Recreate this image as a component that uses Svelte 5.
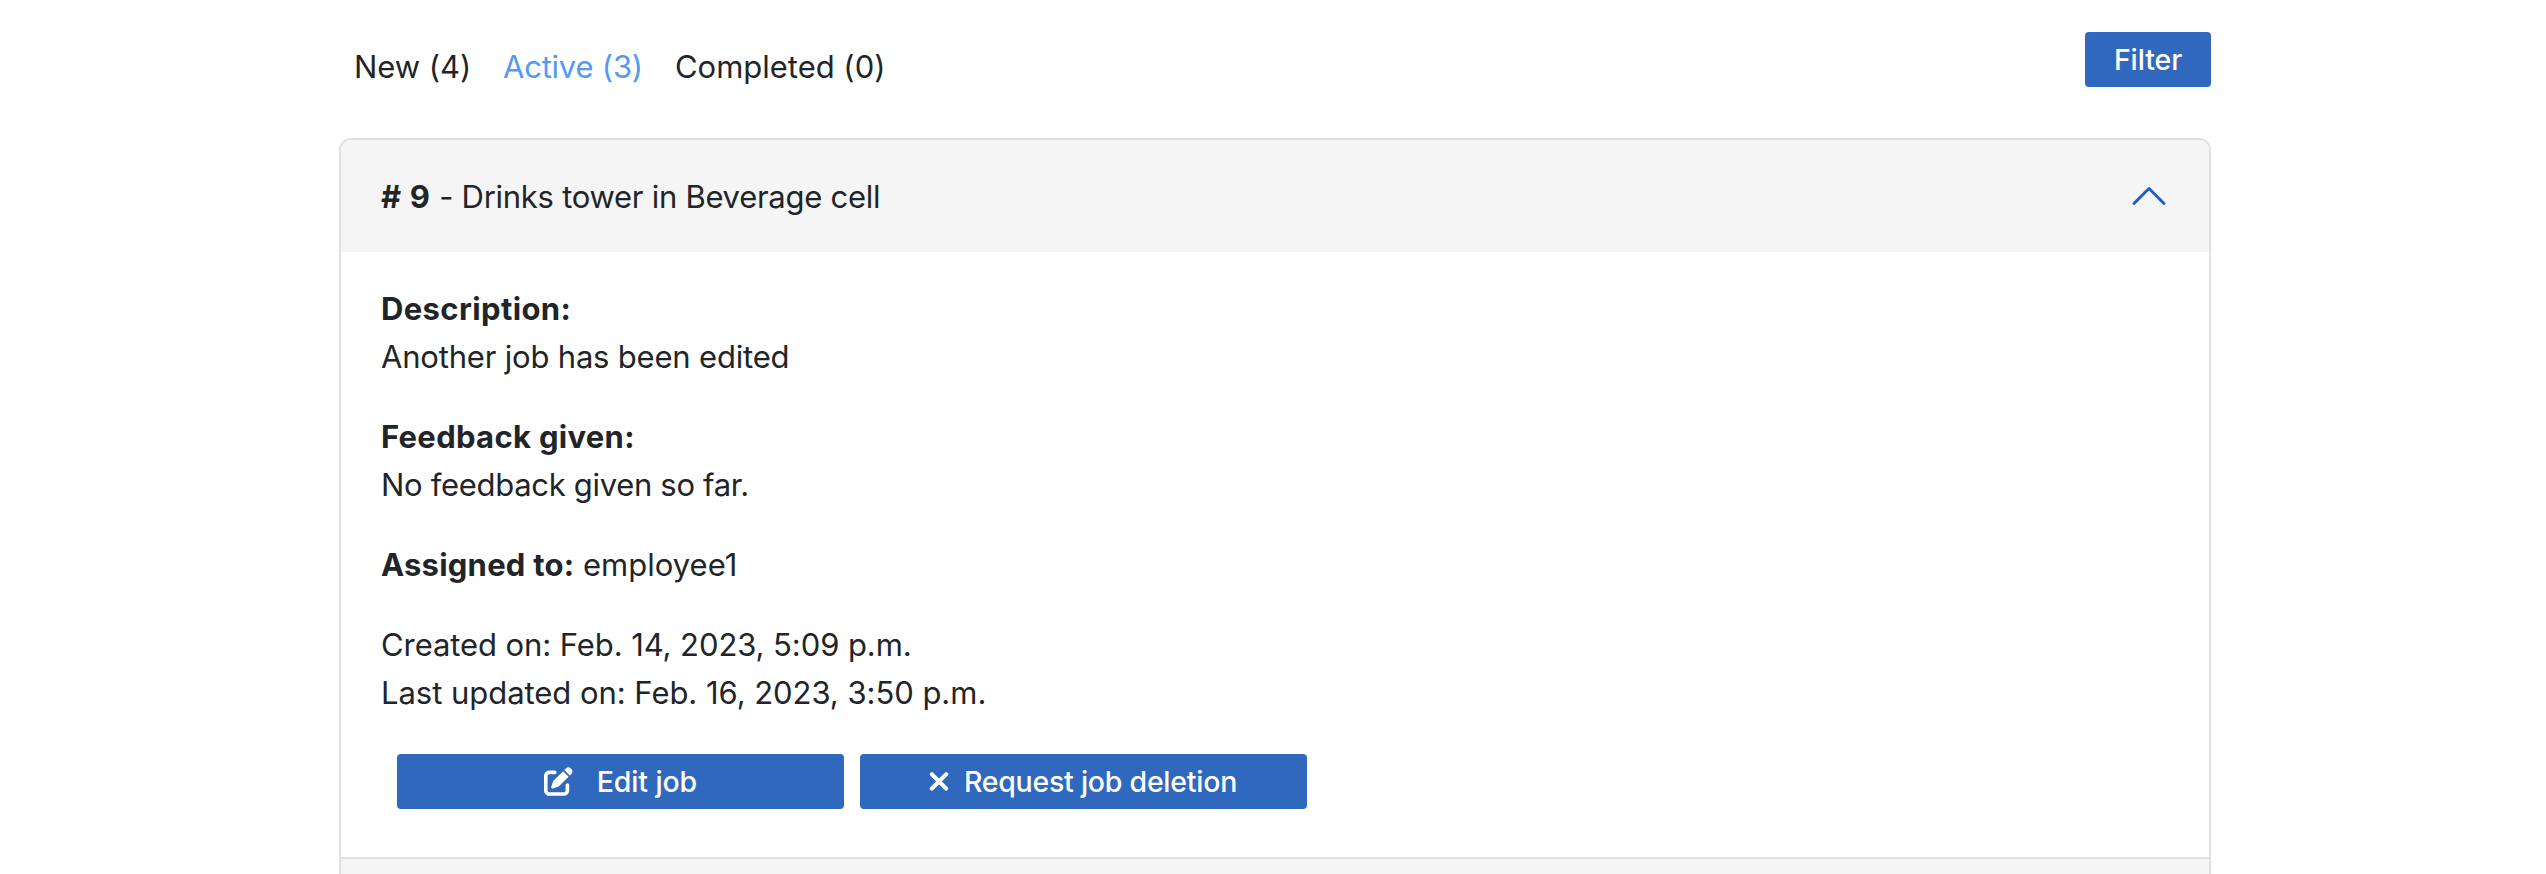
<script>
  const tabs = [
    { label: 'New (4)', spacing: -0.03 },
    { label: 'Active (3)', spacing: -0.22, active: true },
    { label: 'Completed (0)', spacing: -0.02 }
  ];
</script>

<main>
  <div class="toolbar">
    <nav>
      {#each tabs as tab}
        <a class:active={tab.active} style:letter-spacing="{tab.spacing}px">{tab.label}</a>
      {/each}
    </nav>
    <button class="filter">Filter</button>
  </div>

  <section class="accordion">
    <header>
      <h2><strong>#&nbsp;9</strong> - Drinks tower in Beverage cell</h2>
      <svg class="chevron" viewBox="0 0 16 16" aria-hidden="true">
        <path fill-rule="evenodd" d="M1.646 4.646a.5.5 0 0 1 .708 0L8 10.293l5.646-5.647a.5.5 0 0 1 .708.708l-6 6a.5.5 0 0 1-.708 0l-6-6a.5.5 0 0 1 0-.708z" />
      </svg>
    </header>
    <div class="body">
      <p><strong>Description:</strong><br />Another job has been edited</p>
      <p><strong class="label">Feedback given:</strong><br /><span class="tight">No feedback given so far.</span></p>
      <p class="assigned"><strong>Assigned to:</strong> employee1</p>
      <p class="dates"><span>Created on: Feb. 14, 2023, 5:09 p.m.</span><br />Last updated on: Feb. 16, 2023, 3:50 p.m.</p>
      <div class="actions">
        <button class="edit">
          <svg viewBox="0 0 512 512" aria-hidden="true">
            <path d="M471.6 21.7c-21.9-21.9-57.3-21.9-79.2 0L362.3 51.7l97.9 97.9 30.1-30.1c21.9-21.9 21.9-57.3 0-79.2L471.6 21.7zm-299.2 220c-6.1 6.1-10.8 13.6-13.5 21.9l-29.6 88.8c-2.9 8.6-.6 18.1 5.8 24.6s15.9 8.7 24.6 5.8l88.8-29.6c8.2-2.7 15.7-7.4 21.9-13.5L437.7 172.3 339.7 74.3 172.4 241.7zM96 64C43 64 0 107 0 160V416c0 53 43 96 96 96H352c53 0 96-43 96-96V320c0-17.7-14.3-32-32-32s-32 14.3-32 32v96c0 17.7-14.3 32-32 32H96c-17.7 0-32-14.3-32-32V160c0-17.7 14.3-32 32-32h96c17.7 0 32-14.3 32-32s-14.3-32-32-32H96z" />
          </svg>
          <span>Edit job</span>
        </button>
        <button class="delete">
          <svg viewBox="0 0 320 512" aria-hidden="true">
            <path d="M310.6 150.6c12.5-12.5 12.5-32.8 0-45.3s-32.8-12.5-45.3 0L160 210.7 54.6 105.4c-12.5-12.5-32.8-12.5-45.3 0s-12.5 32.8 0 45.3L114.7 256 9.4 361.4c-12.5 12.5-12.5 32.8 0 45.3s32.8 12.5 45.3 0L160 301.3 265.4 406.6c12.5 12.5 32.8 12.5 45.3 0s12.5-32.8 0-45.3L205.3 256 310.6 150.6z" />
          </svg>
          <span>Request job deletion</span>
        </button>
      </div>
    </div>
    <div class="next"></div>
  </section>
</main>

<style>
  :global(body) { background: #fff; overflow: hidden; }
  main {
    box-sizing: border-box;
    width: 2546px;
    height: 874px;
    overflow: hidden;
    padding: 32px 335px 0 339px;
    font: 400 31px/48px Inter, sans-serif;
    color: #212529;
  }
  .toolbar {
    display: flex;
    justify-content: space-between;
    align-items: flex-start;
    height: 106px;
  }
  nav {
    display: grid;
    grid-template-columns: 149px 172px auto;
    padding: 11px 0 0 15px;
  }
  .active { color: #5599f5; }
  button {
    display: flex;
    align-items: center;
    justify-content: center;
    box-sizing: border-box;
    height: 55px;
    padding: 0;
    border: 0;
    border-radius: 4px;
    background: #3068be;
    color: #fff;
    font: 450 28.5px Inter, sans-serif;
  }
  .filter { width: 126px; letter-spacing: -0.1px; }
  .accordion {
    box-sizing: border-box;
    height: 760px;
    border: 2px solid #dee2e6;
    border-radius: 12px;
    overflow: hidden;
  }
  header {
    display: flex;
    justify-content: space-between;
    align-items: center;
    height: 112px;
    padding: 0 40px;
    background: #f5f5f5;
  }
  h2 {
    margin: 2px 0 0;
    font: inherit;
    letter-spacing: -0.27px;
  }
  h2 strong { letter-spacing: 0.7px; }
  .chevron {
    width: 40px;
    height: 40px;
    fill: #2159c5;
    stroke: #2159c5;
    stroke-width: 0.15;
    transform: rotate(180deg);
  }
  .body { padding: 33px 40px 48px; letter-spacing: -0.19px; }
  p { margin: 0 0 32px; }
  strong { font-weight: 700; letter-spacing: 0.38px; }
  .label { letter-spacing: 0.3px; }
  .tight { letter-spacing: -0.31px; }
  .assigned { letter-spacing: 0.02px; }
  .assigned strong { letter-spacing: 0.22px; }
  .dates { margin-bottom: 37px; letter-spacing: -0.04px; }
  .dates span { letter-spacing: -0.08px; }
  .actions { display: flex; gap: 16px; padding-left: 16px; }
  .actions button { width: 447px; }
  .actions svg { height: 28.8px; fill: #fff; }
  .edit { gap: 24px; letter-spacing: -0.1px; }
  .edit svg { width: 28.8px; }
  .delete { gap: 16px; letter-spacing: -0.25px; }
  .delete svg { width: 18px; stroke: #fff; stroke-width: 12; overflow: visible; }
  .next {
    height: 60px;
    border-top: 2px solid #dee2e6;
    background: #f5f5f5;
  }
</style>
